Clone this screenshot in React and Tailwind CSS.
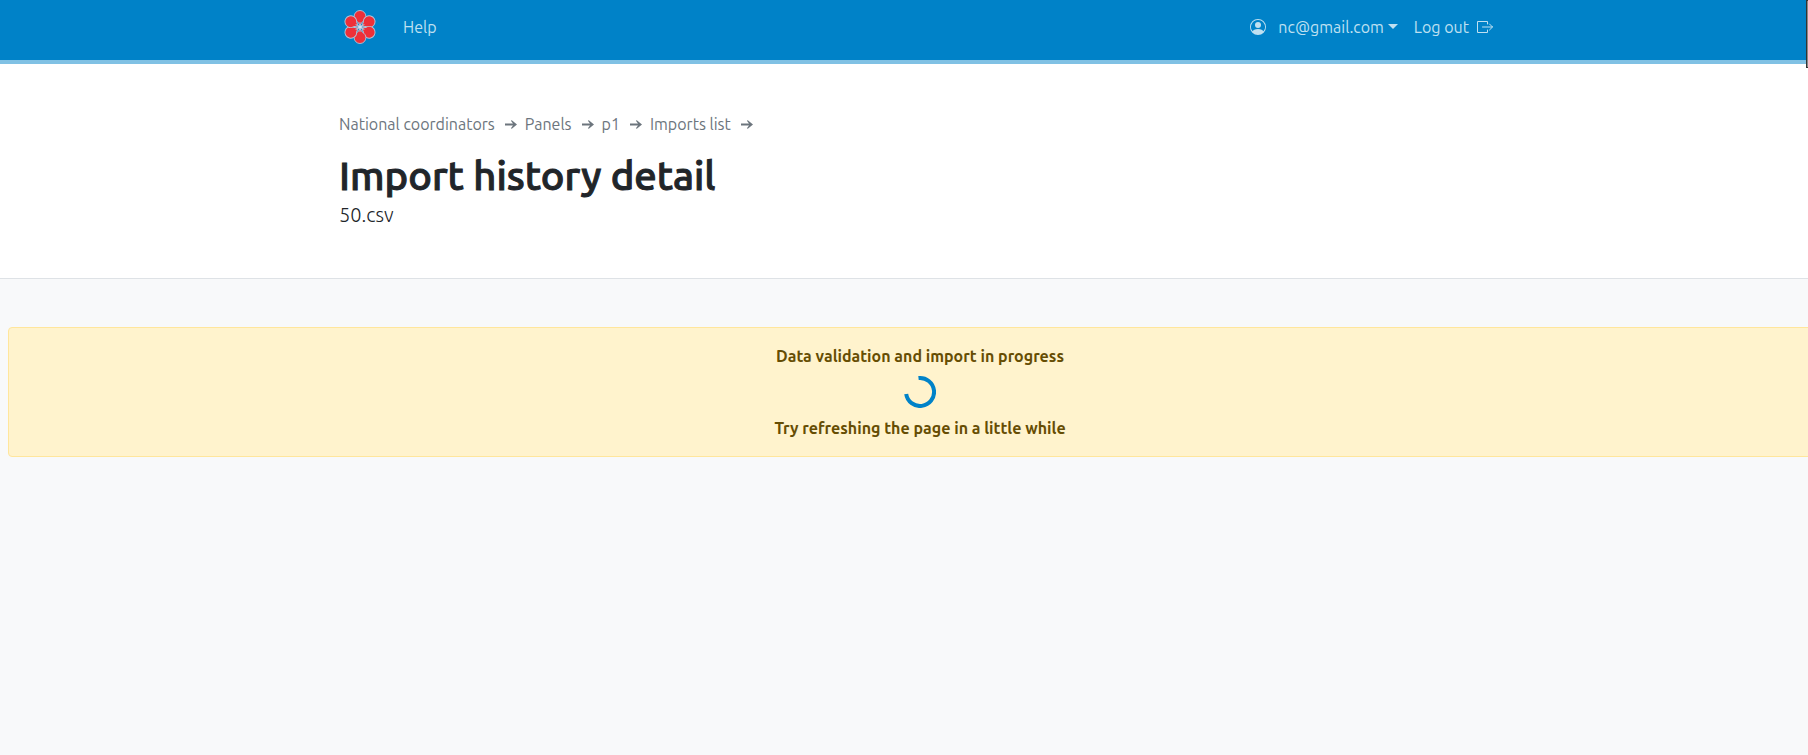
import { BsPersonCircle } from "react-icons/bs";

const crumbs = ["National coordinators", "Panels", "p1", "Imports list"];
const petals = [0, 60, 120, 180, 240, 300];

function Logo() {
  return (
    <svg viewBox="-18 -18 36 36" className="size-9" role="img" aria-label="Home">
      {petals.map((a) => (
        <path
          key={a}
          transform={`rotate(${a})`}
          d="M0 -1.8 L-2.4 -5.2 C-4.7 -6.4 -5.9 -8.6 -5.9 -10.6 A5.9 5.9 0 0 1 5.9 -10.6 C5.9 -8.6 4.7 -6.4 2.4 -5.2 Z"
          fill="#ee2f38"
          stroke="#b5c3d8"
          strokeWidth="0.9"
        />
      ))}
      {petals.map((a) => (
        <path key={a} transform={`rotate(${a})`} d="M0 0V-5" stroke="#b5c3d8" strokeWidth="0.9" />
      ))}
      <circle r="1.8" fill="#d3e2f0" />
    </svg>
  );
}

function LogoutIcon() {
  return (
    <svg viewBox="0 0 16 16" className="size-4" fill="none" stroke="currentColor" aria-hidden="true">
      <path d="M10.5 5V2.5H.5v11h10V11M5.5 8h10M12.5 5l3 3-3 3" strokeLinejoin="round" strokeLinecap="round" />
    </svg>
  );
}

function Arrow() {
  return (
    <svg viewBox="0 0 12 12" className="h-3 w-3" fill="currentColor" aria-hidden="true">
      <path d="M0 5.6H8L5.9 2.8 6.8 2.2 12 6.5 6.8 10.8 5.9 10.2 8 7.4H0Z" />
    </svg>
  );
}

export default function App() {
  return (
    <div className="min-h-screen overflow-x-hidden bg-[#f8f9fa] font-['Ubuntu','Noto_Sans',sans-serif] text-base text-[#212529]">
      <div className="relative -mr-8">
        <header className="border-b-4 border-[#80c1e4] bg-[#0082c8] text-[#bfe0f1]">
          <nav className="mx-auto flex h-15 max-w-[1162px] items-center pr-2 pb-1.5">
            <a href="#home" className="ml-[3px]">
              <Logo />
            </a>
            <a href="#help" className="ml-[25px]">Help</a>
            <button type="button" className="ml-auto flex items-center">
              <BsPersonCircle className="mr-3 size-4" aria-hidden="true" />
              nc@gmail.com
              <span className="mb-0.5 ml-1 border-x-[5px] border-t-[5px] border-x-transparent border-t-current" />
            </button>
            <a href="#logout" className="ml-4 flex items-center gap-2">
              Log out
              <LogoutIcon />
            </a>
          </nav>
        </header>
        <section className="border-b border-[#dee2e6] bg-white py-12">
          <div className="mx-auto max-w-[1162px]">
            <nav aria-label="Breadcrumb" className="flex items-center gap-x-2 text-[#6c757d]">
              {crumbs.map((c) => (
                <span key={c} className="flex items-center gap-2.5">
                  <a href="#crumb">{c}</a>
                  <Arrow />
                </span>
              ))}
            </nav>
            <h1 className="mt-4 text-[40px] leading-12 font-medium [-webkit-text-stroke:1px_currentColor]">
              Import history detail
            </h1>
            <p className="text-xl leading-[30px] font-light">50.csv</p>
          </div>
        </section>
        <main className="px-2 pt-12">
          <div
            role="status"
            className="flex flex-col items-center rounded border border-[#ffe69c] bg-[#fff3cd] p-4 font-bold text-[#664d03]"
          >
            <p>Data validation and import in progress</p>
            <svg viewBox="0 0 32 32" className="my-2 size-8" fill="none" stroke="#0082c8" strokeWidth="4" aria-hidden="true">
              <path d="M14.5 2.1A14 14 0 1 1 2.2 18" />
            </svg>
            <p>Try refreshing the page in a little while</p>
          </div>
        </main>
      </div>
      <div className="absolute top-0 right-0 h-[68px] w-0.5 border border-r-0 border-[#333] bg-[#888]" />
    </div>
  );
}
